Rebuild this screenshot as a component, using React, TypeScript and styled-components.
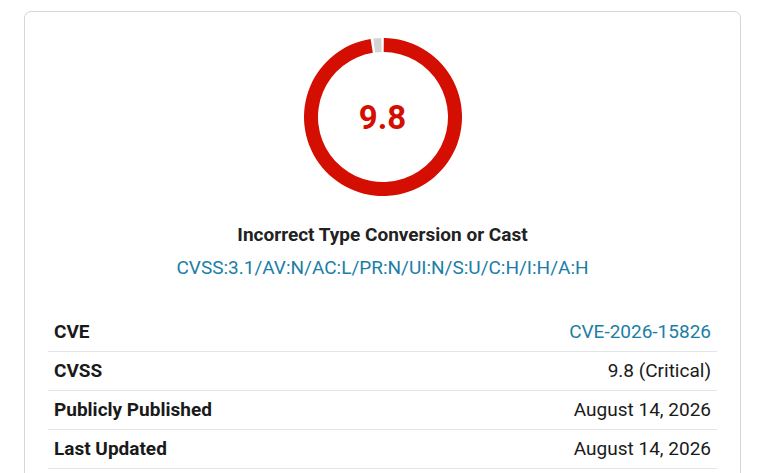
import styled, { createGlobalStyle } from "styled-components";

const GlobalStyle = createGlobalStyle`
  body {
    margin: 0;
    background: #ffffff;
    font-family: Roboto, "Liberation Sans", Arial, sans-serif;
    color: #212121;
  }
`;

const Page = styled.div`
  padding: 11px 27px 0 24px;
`;

const Card = styled.section`
  border: 1px solid #d6d6d6;
  border-radius: 7px;
  padding: 25px 23px 24px;
  display: flex;
  flex-direction: column;
  align-items: center;
`;

const Gauge = styled.div`
  position: relative;
  width: 160px;
  height: 160px;
`;

const Score = styled.span`
  position: absolute;
  inset: 0;
  display: flex;
  align-items: center;
  justify-content: center;
  color: #d40e00;
  font-size: 33px;
  font-weight: 700;
`;

const Title = styled.h2`
  margin: 27px 0 0;
  font-size: 19px;
  font-weight: 700;
  line-height: 22px;
  color: #222;
`;

const Vector = styled.a`
  margin-top: 11px;
  font-size: 19px;
  line-height: 22px;
  color: #1b7ea6;
  text-decoration: none;
`;

const Table = styled.div`
  align-self: stretch;
  margin-top: 34px;
`;

const Row = styled.div`
  display: flex;
  justify-content: space-between;
  padding: 8px 6px 8px;
  line-height: 22px;
  font-size: 19px;
  border-bottom: 1px solid #e2e5e9;
`;

const Label = styled.span`
  font-weight: 700;
  color: #1a1a1a;
`;

const Value = styled.span<{ $link?: boolean }>`
  color: ${(p) => (p.$link ? "#1b7ea6" : "#1a1a1a")};
`;

const polar = (r: number, deg: number) => {
  const a = ((deg - 90) * Math.PI) / 180;
  return [80 + r * Math.cos(a), 80 + r * Math.sin(a)];
};

const arc = (from: number, to: number, ro: number, ri: number) => {
  const large = to - from > 180 ? 1 : 0;
  const [x1, y1] = polar(ro, from);
  const [x2, y2] = polar(ro, to);
  const [x3, y3] = polar(ri, to);
  const [x4, y4] = polar(ri, from);
  return `M${x1} ${y1} A${ro} ${ro} 0 ${large} 1 ${x2} ${y2} L${x3} ${y3} A${ri} ${ri} 0 ${large} 0 ${x4} ${y4} Z`;
};

const rows = [
  { label: "CVE", value: "CVE-2026-15826", link: true },
  { label: "CVSS", value: "9.8 (Critical)" },
  { label: "Publicly Published", value: "August 14, 2026" },
  { label: "Last Updated", value: "August 14, 2026" },
];

export default function App() {
  return (
    <>
      <GlobalStyle />
      <Page>
        <Card>
          <Gauge>
            <svg width="160" height="160" viewBox="0 0 160 160">
              <path d={arc(0.6, 351, 79, 65)} fill="#d40e00" />
              <path d={arc(353, 358.8, 79, 65)} fill="#d3d3d3" />
            </svg>
            <Score>9.8</Score>
          </Gauge>
          <Title>Incorrect Type Conversion or Cast</Title>
          <Vector href="#">CVSS:3.1/AV:N/AC:L/PR:N/UI:N/S:U/C:H/I:H/A:H</Vector>
          <Table>
            {rows.map((r) => (
              <Row key={r.label}>
                <Label>{r.label}</Label>
                <Value $link={r.link}>{r.value}</Value>
              </Row>
            ))}
          </Table>
        </Card>
      </Page>
    </>
  );
}
